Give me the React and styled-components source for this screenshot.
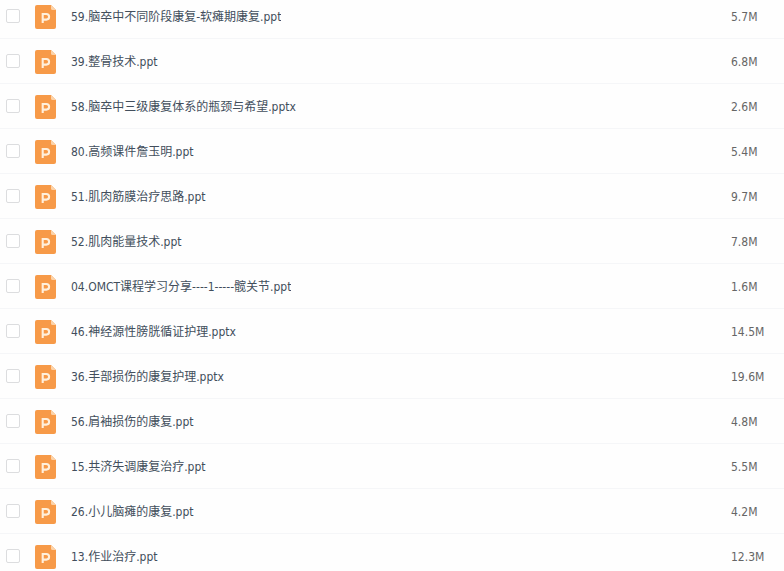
import React from "react";
import styled, { createGlobalStyle } from "styled-components";

const files = [
  ["59.脑卒中不同阶段康复-软瘫期康复.ppt", "5.7M"],
  ["39.整骨技术.ppt", "6.8M"],
  ["58.脑卒中三级康复体系的瓶颈与希望.pptx", "2.6M"],
  ["80.高频课件詹玉明.ppt", "5.4M"],
  ["51.肌肉筋膜治疗思路.ppt", "9.7M"],
  ["52.肌肉能量技术.ppt", "7.8M"],
  ["04.OMCT课程学习分享----1-----髋关节.ppt", "1.6M"],
  ["46.神经源性膀胱循证护理.pptx", "14.5M"],
  ["36.手部损伤的康复护理.pptx", "19.6M"],
  ["56.肩袖损伤的康复.ppt", "4.8M"],
  ["15.共济失调康复治疗.ppt", "5.5M"],
  ["26.小儿脑瘫的康复.ppt", "4.2M"],
  ["13.作业治疗.ppt", "12.3M"],
];

const GlobalStyle = createGlobalStyle`
  * { box-sizing: border-box; }
  body {
    margin: 0;
    background: #fefefe;
    font-family: "DejaVu Sans Condensed", "Noto Sans CJK SC", sans-serif;
    font-size: 12px;
    line-height: 18px;
  }
`;

const Viewport = styled.main`
  height: 100vh;
  overflow: hidden;
`;

/* The list is scrolled slightly, so the top of its first row is cut off. */
const List = styled.ul`
  margin: -6px 0 0;
  padding: 0;
  list-style: none;
`;

const Row = styled.li`
  display: flex;
  align-items: center;
  height: 45px;
  padding: 2px 0 0 6px;
  border-bottom: 1px solid #f5f6f8;
`;

const Checkbox = styled.input`
  appearance: none;
  flex: none;
  width: 14px;
  height: 14px;
  margin: 0 15px 2px 0;
  border: 1px solid #dcdddf;
  border-radius: 2px;
  background: #fff;

  &:checked {
    background: #f79a48;
  }
`;

const FileLabel = styled.label`
  display: flex;
  flex: 1;
  align-items: center;
  gap: 15px;
  min-width: 0;
  color: #424e5c;
`;

const Icon = styled.svg`
  flex: none;
  width: 21px;
  height: 24px;
`;

const FileName = styled.span`
  overflow: hidden;
  white-space: nowrap;
  text-overflow: ellipsis;
`;

const FileSize = styled.span`
  flex: none;
  width: 53px;
  color: #666;
`;

function PptIcon() {
  return (
    <Icon viewBox="0 0 21 24" aria-hidden="true">
      <path d="M2 0H16L21 5V22a2 2 0 0 1-2 2H2a2 2 0 0 1-2-2V2a2 2 0 0 1 2-2Z" fill="#f79a48" />
      <path d="M16 0L21 5H17.5A1.5 1.5 0 0 1 16 3.5Z" fill="#fcd3a9" />
      <path d="M7.7 18V9H11.3a2.8 2.8 0 0 1 0 5.6H7.7" fill="none" stroke="#fff0dc" strokeWidth="2.1" />
    </Icon>
  );
}

export default function App() {
  return (
    <>
      <GlobalStyle />
      <Viewport>
        <List>
          {files.map(([name, size], i) => (
            <Row key={name}>
              <Checkbox type="checkbox" id={`file-${i}`} />
              <FileLabel htmlFor={`file-${i}`}>
                <PptIcon />
                <FileName>{name}</FileName>
              </FileLabel>
              <FileSize>{size}</FileSize>
            </Row>
          ))}
        </List>
      </Viewport>
    </>
  );
}
